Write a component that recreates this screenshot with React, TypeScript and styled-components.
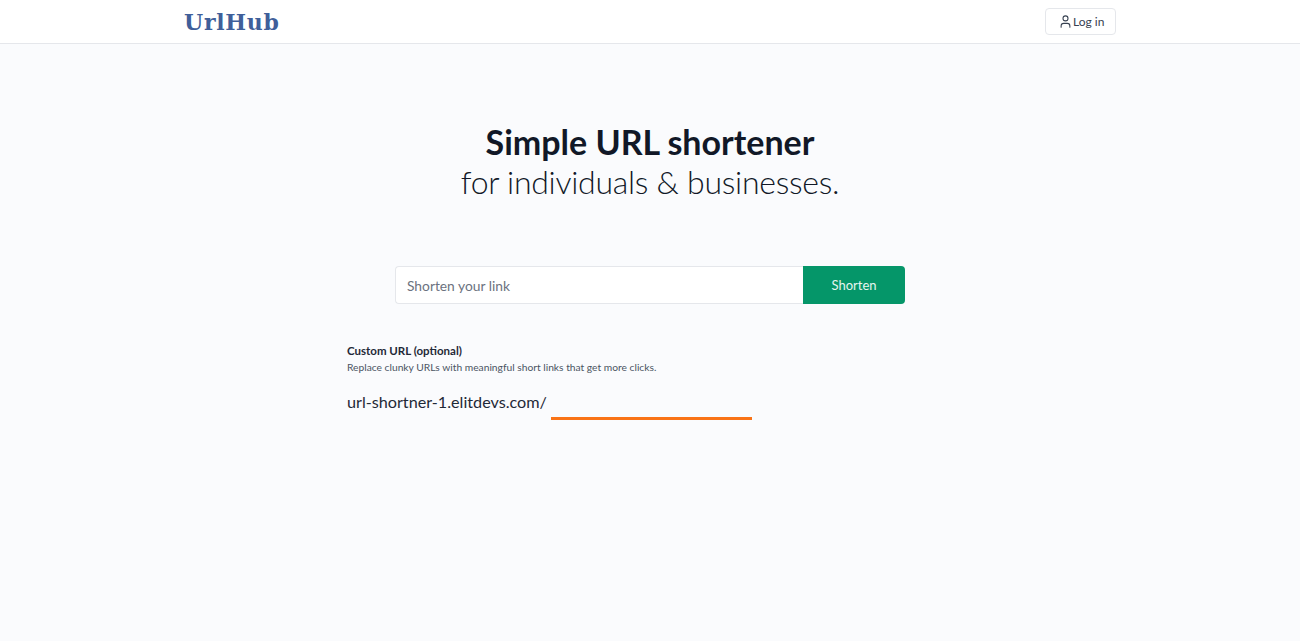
import * as React from 'react';
import styled, { createGlobalStyle } from 'styled-components';
import { User } from 'lucide-react';

const GlobalStyle = createGlobalStyle`
  html, body, #root {
    height: 100%;
    margin: 0;
  }
  body {
    font-family: Lato, "Open Sans", sans-serif;
    background-color: #fafbfd;
    color: #111827;
    overflow: hidden;
  }
  * { box-sizing: border-box; }
`;

const Page = styled.div`
  display: flex;
  flex-direction: column;
  height: 100%;
`;

const Header = styled.header`
  height: 44px;
  flex: none;
  background-color: #fff;
  border-bottom: 1px solid #e5e7eb;
  display: flex;
  align-items: center;
  justify-content: space-between;
  padding: 0 184px 0 184px;
`;

const Logo = styled.a`
  font-family: "DejaVu Serif", serif;
  font-weight: 700;
  font-size: 22px;
  letter-spacing: 0.7px;
  color: #3f5f9a;
`;

const LoginButton = styled.button`
  display: flex;
  align-items: center;
  gap: 0;
  height: 27px;
  width: 71px;
  padding: 0 0 0 12px;
  background: #fff;
  border: 1px solid #e5e7eb;
  border-radius: 4px;
  font-family: inherit;
  font-size: 12px;
  color: #374151;
`;

const Main = styled.main`
  display: flex;
  flex-direction: column;
  align-items: center;
  padding-top: 78px;
`;

const Title = styled.h1`
  margin: 0;
  font-size: 34px;
  line-height: 40px;
  font-weight: 700;
  text-align: center;
  color: #111827;
`;

const Subtitle = styled.p`
  margin: 0;
  font-size: 32px;
  line-height: 40px;
  font-weight: 300;
  letter-spacing: -0.27px;
  text-align: center;
  color: #111827;
`;

const ShortenForm = styled.form`
  display: flex;
  width: 510px;
  height: 38px;
  margin-top: 64px;
`;

const LinkInput = styled.input`
  flex: 1;
  min-width: 0;
  padding: 0 11px;
  background: #fff;
  border: 1px solid #e5e7eb;
  border-right: none;
  border-radius: 4px 0 0 4px;
  font-family: inherit;
  font-size: 13.8px;
  outline: none;
  &::placeholder {
    color: #6b7280;
    opacity: 1;
  }
`;

const ShortenButton = styled.button`
  width: 102px;
  border: none;
  border-radius: 0 4px 4px 0;
  background-color: #059669;
  color: #e6f5ef;
  font-family: inherit;
  font-size: 13px;
`;

const CustomSection = styled.section`
  width: 606px;
  margin-top: 39px;
`;

const CustomLabel = styled.h3`
  margin: 0;
  font-size: 11.5px;
  line-height: 16px;
  font-weight: 700;
  color: #1f2937;
`;

const CustomHint = styled.p`
  margin: 0;
  font-size: 10.25px;
  line-height: 16px;
  color: #4b5563;
`;

const SlugRow = styled.div`
  display: flex;
  align-items: flex-start;
  margin-top: 16px;
`;

const Domain = styled.span`
  font-size: 16.2px;
  line-height: 22px;
  color: #1f2937;
`;

const SlugInput = styled.input`
  width: 201px;
  height: 29px;
  margin-left: 4px;
  padding: 0 4px;
  background: transparent;
  border: none;
  border-bottom: 3px solid #f97316;
  font-family: inherit;
  font-size: 15px;
  outline: none;
`;

export default function App() {
  return (
    <Page>
      <GlobalStyle />
      <Header>
        <Logo>UrlHub</Logo>
        <LoginButton>
          <User size={15} strokeWidth={1.7} />
          Log in
        </LoginButton>
      </Header>
      <Main>
        <Title>Simple URL shortener</Title>
        <Subtitle>for individuals &amp; businesses.</Subtitle>
        <ShortenForm>
          <LinkInput placeholder="Shorten your link" />
          <ShortenButton type="button">Shorten</ShortenButton>
        </ShortenForm>
        <CustomSection>
          <CustomLabel>Custom URL (optional)</CustomLabel>
          <CustomHint>Replace clunky URLs with meaningful short links that get more clicks.</CustomHint>
          <SlugRow>
            <Domain>url-shortner-1.elitdevs.com/</Domain>
            <SlugInput />
          </SlugRow>
        </CustomSection>
      </Main>
    </Page>
  );
}
